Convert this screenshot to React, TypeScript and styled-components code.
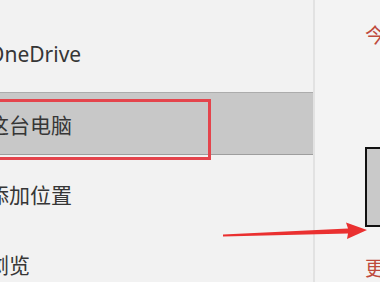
import React from "react";
import styled, { createGlobalStyle } from "styled-components";

const Global = createGlobalStyle`
  html, body { margin: 0; padding: 0; background: #f2f2f2; }
  body { font-family: "Noto Sans", "Noto Sans CJK SC", sans-serif; }
`;

const Screen = styled.div`
  position: relative;
  width: 380px;
  height: 282px;
  overflow: hidden;
  display: flex;
  background: #f2f2f2;
`;

const NavPane = styled.div`
  width: 313px;
  flex: none;
  display: flex;
  flex-direction: column;
  gap: 7px;
  padding-top: 22px;
  box-sizing: border-box;
`;

const NavRow = styled.div<{ $active?: boolean }>`
  position: relative;
  height: 63px;
  flex: none;
  display: flex;
  align-items: center;
  box-sizing: border-box;
  background: ${(p) => (p.$active ? "#c8c8c8" : "transparent")};
  border-top: 1px solid ${(p) => (p.$active ? "#acacac" : "transparent")};
  border-bottom: 1px solid ${(p) => (p.$active ? "#9e9e9e" : "transparent")};
`;

const NavLabel = styled.span`
  margin-left: -12px;
  font-family: "Noto Sans", "Noto Sans CJK SC", sans-serif;
  font-size: 21px;
  color: #363636;
  white-space: nowrap;
`;

const Callout = styled.div`
  position: absolute;
  left: -10px;
  top: 6px;
  width: 221px;
  height: 61px;
  box-sizing: border-box;
  border: 3px solid #e4444c;
  pointer-events: none;
`;

const Divider = styled.div`
  width: 2px;
  flex: none;
  background: #e2e2e2;
`;

const ContentPane = styled.div`
  flex: 1;
  display: flex;
  flex-direction: column;
  padding: 20px 0 0 50px;
  background: #f3f3f3;
  box-sizing: border-box;
`;

const Heading = styled.div<{ $gap?: number }>`
  margin-top: ${(p) => p.$gap ?? 0}px;
  font-family: "Noto Sans CJK SC", sans-serif;
  font-size: 20px;
  line-height: 30px;
  color: #be4a3c;
  white-space: nowrap;
`;

const PreviewBox = styled.div`
  margin-top: 97px;
  width: 60px;
  height: 80px;
  flex: none;
  box-sizing: border-box;
  background: #c9c9c9;
  border: 2px solid #111;
  border-right: none;
`;

const Arrow = styled.svg`
  position: absolute;
  left: 0;
  top: 0;
  width: 380px;
  height: 282px;
  pointer-events: none;
`;

const items = ["OneDrive", "这台电脑", "添加位置", "浏览"];

export default function App() {
  return (
    <>
      <Global />
      <Screen>
        <NavPane>
          {items.map((t, i) => (
            <NavRow key={t} $active={i === 1}>
              <NavLabel>{t}</NavLabel>
              {i === 1 && <Callout />}
            </NavRow>
          ))}
        </NavPane>
        <Divider />
        <ContentPane>
          <Heading>今</Heading>
          <PreviewBox />
          <Heading $gap={26}>更</Heading>
        </ContentPane>
        <Arrow viewBox="0 0 380 282">
          <polygon
            points="223,234.6 348,228.6 346,222.5 367,230 347,239 348,233.6 223,236.6"
            fill="#ea3030"
          />
        </Arrow>
      </Screen>
    </>
  );
}
